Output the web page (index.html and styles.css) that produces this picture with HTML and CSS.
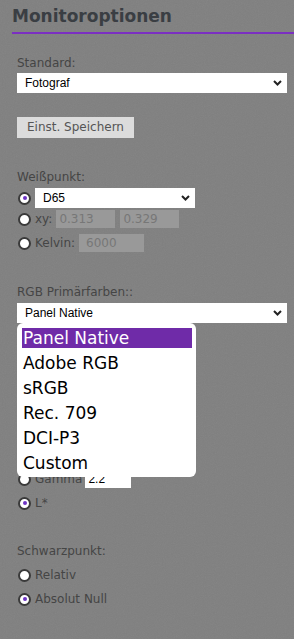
FILE: index.html
```html
<!DOCTYPE html>
<html lang="de">
<head>
<meta charset="utf-8">
<title>Monitoroptionen</title>
<link rel="stylesheet" href="styles.css">
</head>
<body>
<div class="panel">
  <h1 class="title">Monitoroptionen</h1>
  <div class="content">
    <div class="label lbl-standard">Standard:</div>
    <div class="select wide">
      <span>Fotograf</span>
      <svg class="chev" width="9" height="6" viewBox="0 0 9 6"><path d="M1 1 L4.5 4.5 L8 1" fill="none" stroke="#222" stroke-width="2"/></svg>
    </div>
    <div class="button">Einst. Speichern</div>

    <div class="label lbl-weiss">Weißpunkt:</div>
    <div class="row row1">
      <span class="radio checked"></span>
      <div class="select small">
        <span>D65</span>
        <svg class="chev" width="9" height="6" viewBox="0 0 9 6"><path d="M1 1 L4.5 4.5 L8 1" fill="none" stroke="#222" stroke-width="2"/></svg>
      </div>
    </div>
    <div class="row row2">
      <span class="radio"></span>
      <span class="rtext">xy:</span>
      <span class="field f-xy">0.313</span>
      <span class="field f-xy">0.329</span>
    </div>
    <div class="row row3">
      <span class="radio"></span>
      <span class="rtext">Kelvin:</span>
      <span class="field f-kelvin">6000</span>
    </div>

    <div class="label lbl-rgb">RGB Primärfarben::</div>
    <div class="select-wrap">
      <div class="select wide-flat">
        <span>Panel Native</span>
        <svg class="chev" width="9" height="6" viewBox="0 0 9 6"><path d="M1 1 L4.5 4.5 L8 1" fill="none" stroke="#222" stroke-width="2"/></svg>
      </div>
      <ul class="popup">
        <li class="opt active">Panel Native</li>
        <li class="opt">Adobe RGB</li>
        <li class="opt">sRGB</li>
        <li class="opt">Rec. 709</li>
        <li class="opt">DCI-P3</li>
        <li class="opt">Custom</li>
      </ul>
    </div>

    <div class="row row-gamma">
      <span class="radio"></span>
      <span class="rtext">Gamma</span>
      <span class="field f-gamma">2.2</span>
    </div>
    <div class="row row-l">
      <span class="radio checked"></span>
      <span class="rtext">L*</span>
    </div>

    <div class="label lbl-schwarz">Schwarzpunkt:</div>
    <div class="row row-rel">
      <span class="radio"></span>
      <span class="rtext">Relativ</span>
    </div>
    <div class="row row-abs">
      <span class="radio checked"></span>
      <span class="rtext">Absolut Null</span>
    </div>
  </div>
</div>
</body>
</html>
```

FILE: styles.css
```css
html, body {
  margin: 0;
  padding: 0;
}
body {
  background-color: #7f7f7f;
  background-image: url("data:image/svg+xml;utf8,<svg xmlns='http://www.w3.org/2000/svg' width='160' height='160'><filter id='n'><feTurbulence type='fractalNoise' baseFrequency='0.9' numOctaves='2' stitchTiles='stitch'/><feColorMatrix type='saturate' values='0'/></filter><rect width='160' height='160' filter='url(%23n)' opacity='0.08'/></svg>");
  font-family: "DejaVu Sans", Verdana, sans-serif;
  font-size: 12px;
  color: #454545;
  width: 294px;
  height: 639px;
  overflow: hidden;
}
.panel {
  padding-left: 12px;
}
.title {
  margin: 0;
  font-size: 17px;
  font-weight: bold;
  color: #3a3e43;
  line-height: 32px;
  height: 32px;
  border-bottom: 2px solid #7b2fc2;
}
.content {
  padding-left: 5px;
  display: flow-root;
}
.label {
  line-height: 15px;
  height: 15px;
  color: #454545;
}
.lbl-standard { margin-top: 22px; }
.select {
  background: #fff;
  height: 20px;
  display: flex;
  align-items: center;
  justify-content: space-between;
  font-family: "Liberation Sans", Arial, sans-serif;
  font-size: 12px;
  color: #000;
  box-sizing: border-box;
}
.select span { padding-left: 8px; }
.select .chev { margin-right: 5px; }
.wide { width: 270px; margin-top: 2px; }
.wide-flat { width: 270px; }
.button {
  margin-top: 24px;
  width: 117px;
  height: 21px;
  background: #dcdcdc;
  color: #555;
  line-height: 21px;
  text-align: center;
  font-size: 12px;
}
.lbl-weiss { margin-top: 32px; }
.row {
  display: flex;
  align-items: center;
  gap: 4px;
}
.radio {
  width: 13px;
  height: 13px;
  box-sizing: border-box;
  border: 2px solid #3a3a3a;
  border-radius: 50%;
  background: #fff;
  margin-left: 1px;
  flex: none;
  position: relative;
}
.radio.checked::after {
  content: "";
  position: absolute;
  left: 2.5px;
  top: 2.5px;
  width: 4px;
  height: 4px;
  border-radius: 50%;
  background: #6d33c4;
}
.rtext {
  color: #454545;
}
.row1 { margin-top: 3px; height: 20px; }
.small { width: 160px; }
.row2 { margin-top: 2px; height: 18px; }
.row3 { margin-top: 6px; height: 18px; }
.field {
  height: 18px;
  line-height: 18px;
  background: #999;
  color: #777;
  box-sizing: border-box;
  padding-left: 3px;
}
.f-xy { width: 59px; }
.f-xy + .f-xy { margin-left: 1px; }
.f-kelvin { width: 65px; padding-left: 7px; }
.lbl-rgb { margin-top: 33px; }
.select-wrap {
  position: relative;
  width: 270px;
  margin-top: 3px;
}
.popup {
  position: absolute;
  top: 20px;
  left: 0;
  width: 179px;
  height: 154px;
  margin: 0;
  padding: 5px 4px 0 5px;
  box-sizing: border-box;
  list-style: none;
  background: #fff;
  border-radius: 6px;
  z-index: 2;
}
.opt {
  height: 20px;
  line-height: 20px;
  margin-bottom: 5px;
  font-size: 17px;
  color: #000;
  padding-left: 1px;
}
.opt.active {
  background: #6f2ba8;
  color: #fff;
}
.row-gamma { margin-top: 147px; height: 18px; }
.row-gamma .rtext { margin-right: -1px; }
.f-gamma {
  background: #fff;
  color: #000;
  width: 46px;
  font-family: "Liberation Sans", Arial, sans-serif;
}
.row-l { margin-top: 6px; height: 18px; }
.lbl-schwarz { margin-top: 32px; }
.row-rel { margin-top: 7px; height: 18px; }
.row-abs { margin-top: 6px; height: 18px; }
```
